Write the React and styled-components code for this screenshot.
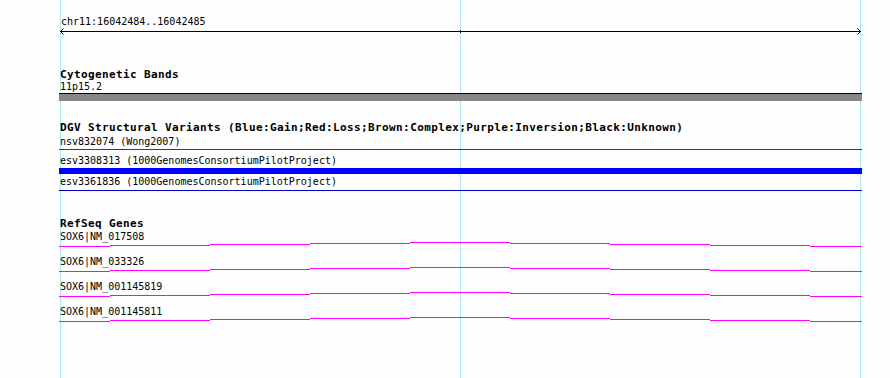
import React from 'react';
import styled, { createGlobalStyle } from 'styled-components';

const GlobalStyle = createGlobalStyle`
  html, body {
    margin: 0;
    padding: 0;
    background: #ffffff;
  }
  body {
    font-family: "DejaVu Sans Mono", "Liberation Mono", monospace;
    color: #000;
  }
`;

const TRACK_W = 803;

const Page = styled.div`
  position: relative;
  width: 890px;
  height: 378px;
  overflow: hidden;
  background: #fdfefd;
`;

const GridLine = styled.div`
  position: absolute;
  top: 0;
  bottom: 0;
  left: ${(p) => p.x}px;
  width: 1px;
  background: #ade9ee;
  z-index: 0;
`;

const Tracks = styled.div`
  position: relative;
  z-index: 1;
  display: flex;
  flex-direction: column;
  width: ${TRACK_W}px;
  padding-left: 59px;
`;

const Ruler = styled.div`
  display: flex;
  flex-direction: column;
  padding-top: 16px;
`;

const RulerLabel = styled.div`
  font-size: 10px;
  line-height: 11px;
  padding-left: 2px;
`;

const RulerSvg = styled.svg`
  display: block;
  margin-top: 1px;
`;

const Track = styled.section`
  display: flex;
  flex-direction: column;
  margin-top: ${(p) => p.gap}px;
`;

const TrackTitle = styled.div`
  font-size: 11px;
  font-weight: bold;
  line-height: 11px;
  letter-spacing: 0.38px;
  white-space: nowrap;
  padding-left: 1px;
`;

const Label = styled.div`
  font-size: 10px;
  line-height: 11px;
  padding-left: 1px;
  white-space: nowrap;
  margin-top: ${(p) => p.gap || 0}px;
`;

const Band = styled.div`
  margin-top: 1px;
  height: 7px;
  border-top: 1px solid #000;
  background: #898687;
`;

const FeatureBar = styled.div`
  margin-top: ${(p) => p.gap}px;
  height: ${(p) => p.h}px;
  background: ${(p) => p.color};
`;

const GeneRow = styled.div`
  display: flex;
  flex-direction: column;
`;

const GeneSvg = styled.svg`
  display: block;
`;

// each gene model is drawn as short stepped segments, 100px wide
const steps = [
  [0, 51, 4],
  [51, 151, 3],
  [151, 251, 2],
  [251, 351, 1],
  [351, 451, 0],
  [451, 551, 1],
  [551, 651, 2],
  [651, 751, 3],
  [751, 803, 4],
];

const GeneLine = () => (
  <GeneSvg width={TRACK_W} height={14}>
    {steps.map(([a, b, y]) => (
      <line key={a} x1={a} x2={b} y1={y + 0.5} y2={y + 0.5} stroke="#ff00ff" strokeWidth="1" />
    ))}
  </GeneSvg>
);

const genes = ['SOX6|NM_017508', 'SOX6|NM_033326', 'SOX6|NM_001145819', 'SOX6|NM_001145811'];

export default function App() {
  return (
    <Page>
      <GlobalStyle />
      <GridLine x={60} />
      <GridLine x={460} />
      <GridLine x={860} />
      <Tracks>
        <Ruler>
          <RulerLabel>chr11:16042484..16042485</RulerLabel>
          <RulerSvg width={TRACK_W} height={7}>
            <line x1="1" x2="802" y1="3.5" y2="3.5" stroke="#000" strokeWidth="1" />
            <polyline points="4.5,0.5 1.5,3.5 4.5,6.5" fill="none" stroke="#000" strokeWidth="1" />
            <polyline points="798.5,0.5 801.5,3.5 798.5,6.5" fill="none" stroke="#000" strokeWidth="1" />
            <line x1="401.5" x2="401.5" y1="2" y2="5" stroke="#000" strokeWidth="1" />
          </RulerSvg>
        </Ruler>

        <Track gap={34}>
          <TrackTitle>Cytogenetic Bands</TrackTitle>
          <Label gap={1}>11p15.2</Label>
          <Band />
        </Track>

        <Track gap={21}>
          <TrackTitle>
            DGV Structural Variants (Blue:Gain;Red:Loss;Brown:Complex;Purple:Inversion;Black:Unknown)
          </TrackTitle>
          <Label gap={3}>nsv832074 (Wong2007)</Label>
          <FeatureBar gap={2} h={1} color="#d40000" />
          <Label gap={5}>esv3308313 (1000GenomesConsortiumPilotProject)</Label>
          <FeatureBar gap={2} h={6} color="#0000ff" />
          <Label gap={2}>esv3361836 (1000GenomesConsortiumPilotProject)</Label>
          <FeatureBar gap={3} h={1} color="#0000c4" />
        </Track>

        <Track gap={27}>
          <TrackTitle>RefSeq Genes</TrackTitle>
          {genes.map((g, i) => (
            <GeneRow key={g}>
              <Label gap={i === 0 ? 2 : 0}>{g}</Label>
              <GeneLine />
            </GeneRow>
          ))}
        </Track>
      </Tracks>
    </Page>
  );
}
